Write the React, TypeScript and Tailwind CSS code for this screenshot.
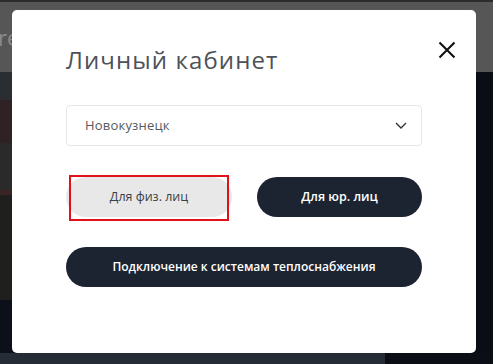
import React from "react";

export default function App() {
  const font = { fontFamily: '"Open Sans", "Liberation Sans", sans-serif' };
  return (
    <div className="relative w-[493px] h-[364px] overflow-hidden bg-[#0a0d14]" style={font}>
      {/* background page (dimmed) */}
      <div className="flex flex-col h-full">
        <div className="h-[2px] bg-[#2b2b2b]" />
        <div className="h-[70px] bg-[#565656] flex items-center pl-0">
          <span className="text-[22px] text-[#8a8a8a] -ml-[2px]">re</span>
        </div>
        <div className="flex flex-1">
          <div className="w-[20px] flex flex-col">
            <div className="h-[28px] bg-[#2a2d31]" />
            <div className="h-[43px] bg-[#2e2224]" />
            <div className="h-[47px] bg-[#2a2a2a]" />
            <div className="h-[5px] bg-[#3a2426]" />
            <div className="h-[105px] bg-[#1f201d]" />
            <div className="flex-1 bg-[#0c1018]" />
          </div>
          <div className="flex-1 bg-[#0a0d14]" />
        </div>
        <div className="h-[11px] flex">
          <div className="w-[385px] bg-[#262c36]" />
          <div className="flex-1 bg-[#0b0e15]" />
        </div>
      </div>

      {/* modal */}
      <div className="absolute left-[12px] top-[10px] w-[464px] h-[343px] bg-white rounded-[5px] px-[54px] pt-[35px]">
        <button className="absolute left-[426px] top-[31px] w-[18px] h-[18px] flex items-center justify-center">
          <svg width="18" height="18" viewBox="0 0 18 18" fill="none">
            <path d="M1.5 1.5 L16.5 16.5 M16.5 1.5 L1.5 16.5" stroke="#111" strokeWidth="2.1" strokeLinecap="butt" />
          </svg>
        </button>

        <h2 className="text-[24px] leading-[30px] text-[#4d5259] font-normal tracking-[1.1px]">Личный кабинет</h2>

        <div className="mt-[30px] h-[41px] border border-[#e6e6e6] rounded-[4px] flex items-center justify-between pl-[18px] pr-[14px]">
          <span className="text-[13px] text-[#555a60] tracking-[0.2px]">Новокузнецк</span>
          <svg width="12" height="7" viewBox="0 0 12 7" fill="none">
            <path d="M1 1 L6 6 L11 1" stroke="#333" strokeWidth="1.4" />
          </svg>
        </div>

        <div className="mt-[31px] flex justify-between">
          <button className="w-[166px] h-[40px] rounded-full bg-[#e8e8e8] text-[12.5px] text-[#3b3f45]">Для физ. лиц</button>
          <button className="w-[165px] h-[40px] rounded-full bg-[#1c2331] text-[12.5px] font-semibold text-white">Для юр. лиц</button>
        </div>

        <button className="mt-[30px] w-full h-[40px] rounded-full bg-[#1c2331] text-[12px] font-semibold text-white">
          Подключение к системам теплоснабжения
        </button>

        {/* red annotation */}
        <div className="absolute left-[57px] top-[165px] w-[160px] h-[46px] border-2 border-[#e3101b] pointer-events-none" />
      </div>
    </div>
  );
}
